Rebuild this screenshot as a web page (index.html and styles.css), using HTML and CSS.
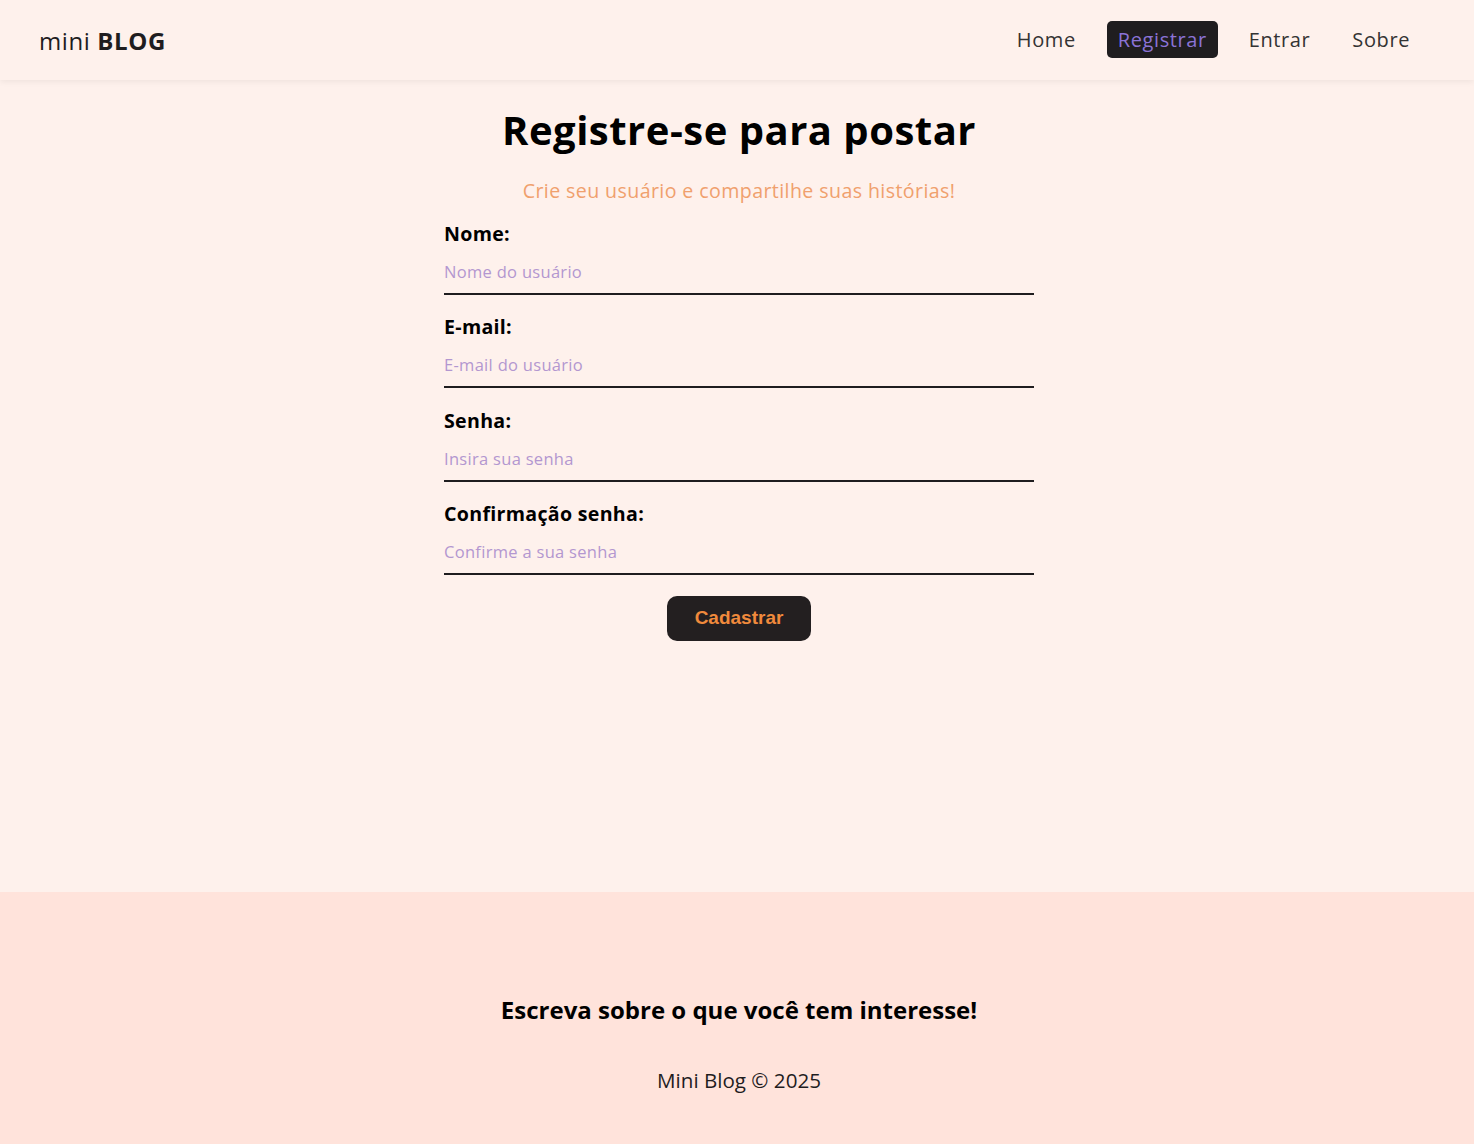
FILE: index.html
```html
<!DOCTYPE html>
<html lang="pt-BR">
<head>
<meta charset="utf-8">
<title>mini BLOG</title>
<link rel="stylesheet" href="styles.css">
</head>
<body>
<div class="app">
  <header class="navbar">
    <a class="brand" href="#">mini <span class="brand-strong">BLOG</span></a>
    <nav class="links">
      <a class="link" href="#">Home</a>
      <a class="link active" href="#">Registrar</a>
      <a class="link" href="#">Entrar</a>
      <a class="link" href="#">Sobre</a>
    </nav>
  </header>
  <main class="main">
    <section class="register">
      <h1 class="title">Registre-se para postar</h1>
      <p class="subtitle">Crie seu usuário e compartilhe suas histórias!</p>
      <form class="form">
        <label class="field">
          <span class="label">Nome:</span>
          <input class="input" type="text" placeholder="Nome do usuário">
        </label>
        <label class="field">
          <span class="label">E-mail:</span>
          <input class="input" type="email" placeholder="E-mail do usuário">
        </label>
        <label class="field">
          <span class="label">Senha:</span>
          <input class="input" type="password" placeholder="Insira sua senha">
        </label>
        <label class="field">
          <span class="label">Confirmação senha:</span>
          <input class="input" type="password" placeholder="Confirme a sua senha">
        </label>
        <button class="btn" type="button">Cadastrar</button>
      </form>
    </section>
  </main>
  <footer class="footer">
    <h3 class="footer-title">Escreva sobre o que você tem interesse!</h3>
    <p class="footer-copy">Mini Blog &copy; 2025</p>
  </footer>
</div>
</body>
</html>
```

FILE: styles.css
```css
* { box-sizing: border-box; }
html, body { margin: 0; padding: 0; }
body {
  background: #fef1ec;
  font-family: "Open Sans", "Noto Sans", sans-serif;
  color: #1f1d1f;
}
.app {
  min-height: 100vh;
  display: flex;
  flex-direction: column;
}
.navbar {
  height: 80px;
  display: flex;
  align-items: center;
  justify-content: space-between;
  padding: 0 53px 0 39px;
  background: #fef1ec;
  box-shadow: 0 2px 6px rgba(0,0,0,0.06);
  position: relative;
  z-index: 1;
}
.brand {
  font-size: 24px;
  color: #1f1d1f;
  text-decoration: none;
  letter-spacing: 0.6px;
}
.brand-strong { font-weight: 700; }
.links {
  display: flex;
  align-items: center;
  gap: 20px;
  margin-top: -2px;
}
.link {
  font-size: 20px;
  color: #333;
  text-decoration: none;
  padding: 5px 11px;
  border-radius: 5px;
  letter-spacing: 0.6px;
}
.active {
  background: #1f1d1f;
  color: #8b73d6;
}
.main {
  flex: 1;
  display: flex;
  justify-content: center;
  padding-left: 4px;
}
.register {
  width: 590px;
  display: flex;
  flex-direction: column;
  align-items: center;
  padding-top: 22px;
}
.title {
  margin: 0;
  font-size: 40px;
  font-weight: 700;
  color: #000;
  letter-spacing: 0.5px;
}
.subtitle {
  margin: 20px 0 0;
  font-size: 19.6px;
  color: #f0a06d;
  letter-spacing: 0.4px;
}
.form {
  width: 100%;
  display: flex;
  flex-direction: column;
  margin-top: 16px;
}
.field {
  display: flex;
  flex-direction: column;
  margin-bottom: 18.4px;
}
.label {
  font-size: 19.6px;
  font-weight: 700;
  color: #000;
  letter-spacing: 0.3px;
}
.input {
  border: none;
  border-bottom: 2px solid #1f1d1f;
  background: transparent;
  padding: 13px 0 10px;
  font-family: inherit;
  font-size: 16.5px;
  outline: none;
}
.input::placeholder {
  color: #b397d0;
  letter-spacing: 0.3px;
}
.btn {
  align-self: center;
  margin-top: 2px;
  width: 144px;
  height: 45px;
  border: none;
  border-radius: 10px;
  background: #231f20;
  color: #f08a3c;
  font-family: "Liberation Sans", Arial, sans-serif;
  font-weight: 700;
  font-size: 19px;
}
.footer {
  height: 252px;
  background: #ffe3db;
  display: flex;
  flex-direction: column;
  align-items: center;
  justify-content: flex-end;
  padding-bottom: 50px;
  padding-left: 4px;
}
.footer-title {
  margin: 0;
  font-size: 24px;
  font-weight: 700;
  color: #000;
}
.footer-copy {
  margin: 40px 0 0;
  font-size: 20.6px;
  color: #1f1d1f;
}
```
